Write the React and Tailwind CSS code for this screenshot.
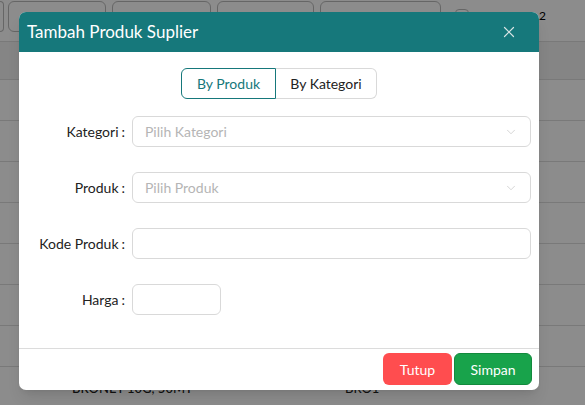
import { useState } from 'react';
import { X, ChevronDown, Filter, Plus, Download, Search } from 'lucide-react';

// Tombol-tombol toolbar di halaman belakang (tertutup overlay)
const toolbar = [
  { icon: Filter, w: 'w-[98px]' },
  { icon: Plus, w: 'w-[99px]' },
  { icon: Download, w: 'w-[97px]' },
  { icon: Search, w: 'w-[121px]' },
];

const SelectBox = ({ placeholder }) => (
  <div className="flex-1 h-[31px] rounded-md border border-[#d9d9d9] flex items-center justify-between pl-3 pr-3">
    <span className="text-[#b5b5b5] text-[14px]">{placeholder}</span>
    <ChevronDown size={14} strokeWidth={1.2} className="text-[#c4c4c4]" />
  </div>
);

const FormRow = ({ label, children }) => (
  <div className="flex items-center">
    <div className="w-[106px] text-right text-[14px] text-[#222]">
      {label}<span className="ml-[3px]">:</span>
    </div>
    <div className="flex-1 flex pl-[7px]">{children}</div>
  </div>
);

const App = () => {
  const [mode, setMode] = useState('produk');

  return (
    <div className="relative w-[585px] h-[405px] overflow-hidden bg-white" style={{ fontFamily: 'Lato, "Open Sans", sans-serif' }}>
      {/* Halaman belakang */}
      <div className="h-[41px] flex items-start pt-[1px]">
        <div className="w-[4px] h-[31px] border border-[#bbb] rounded-r-md border-l-0" />
        <div className="flex gap-[6px] ml-[4px]">
          {toolbar.map((t, i) => (
            <div key={i} className={`${t.w} h-[31px] border border-[#bbb] rounded-md flex items-start pt-[9px] pl-[20px] text-[#333]`}>
              <t.icon size={13} />
            </div>
          ))}
        </div>
        <div className="ml-[14px] mt-[8px] w-[14px] h-[14px] border border-[#bbb] rounded-sm" />
        <span className="ml-[70px] mt-[6px] text-[12px] text-black">2</span>
      </div>
      <div className="h-[39px] bg-[#f3f3f3] border-y border-[#ddd]" />
      {Array.from({ length: 7 }).map((_, i) => (
        <div key={i} className="h-[41px] border-b border-[#ddd]" />
      ))}
      <div className="h-[41px] flex items-start pt-[12px] text-[13px] text-[#222]">
        <span className="ml-[72px] w-[273px] font-medium">BRONET 10G, 50MT</span>
        <span>BRO1</span>
      </div>

      {/* Overlay + modal */}
      <div className="absolute inset-0 bg-black/45">
        <div className="ml-[19px] mt-[12px] w-[520px] bg-white rounded-[7px] overflow-hidden shadow-lg">
          <div className="h-[40px] bg-[#16787b] flex items-center justify-between pl-[8px] pr-[21px]">
            <h2 className="text-white text-[17px]">Tambah Produk Suplier</h2>
            <X size={18} strokeWidth={1.6} className="text-[#d6e3e3]" />
          </div>

          <div className="pt-[16px] pb-[33px] pr-[8px]">
            <div className="flex justify-center pl-[8px] mb-[17px]">
              <div className="flex h-[31px] text-[14px]">
                <button
                  onClick={() => setMode('produk')}
                  className={`w-[95px] rounded-l-md border ${mode === 'produk' ? 'border-[#16787b] text-[#16787b]' : 'border-[#d9d9d9] text-[#222]'}`}
                >
                  By Produk
                </button>
                <button
                  onClick={() => setMode('kategori')}
                  className={`w-[101px] rounded-r-md border border-l-0 ${mode === 'kategori' ? 'border-[#16787b] text-[#16787b]' : 'border-[#d9d9d9] text-[#222]'}`}
                >
                  By Kategori
                </button>
              </div>
            </div>

            <div className="flex flex-col gap-[25px]">
              <FormRow label="Kategori">
                <SelectBox placeholder="Pilih Kategori" />
              </FormRow>
              <FormRow label="Produk">
                <SelectBox placeholder="Pilih Produk" />
              </FormRow>
              <FormRow label="Kode Produk">
                <div className="flex-1 h-[31px] rounded-md border border-[#d9d9d9]" />
              </FormRow>
              <FormRow label="Harga">
                <div className="w-[89px] h-[31px] rounded-md border border-[#d9d9d9]" />
              </FormRow>
            </div>
          </div>

          <div className="border-t border-[#dcdcdc] flex justify-end gap-[2px] pt-[4px] pb-[5px] pr-[7px]">
            <button className="w-[69px] h-[32px] rounded-md bg-[#ff4d4f] text-white text-[14px]">Tutup</button>
            <button className="w-[78px] h-[32px] rounded-md bg-[#18a34b] border border-[#138a3d] text-white text-[14px]">Simpan</button>
          </div>
        </div>
      </div>
    </div>
  );
};

export default App;
